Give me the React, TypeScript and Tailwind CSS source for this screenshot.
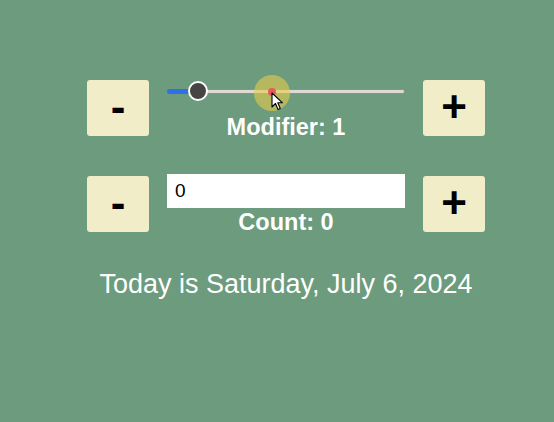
import React from "react";

function Btn({ label }: { label: string }) {
  return (
    <button className="w-[62px] h-[56px] rounded-[3px] bg-[#f1edc8] text-black text-[44px] font-bold leading-none flex items-center justify-center pb-[3px] font-['Liberation_Sans',Arial,sans-serif]">
      {label}
    </button>
  );
}

export default function App() {
  return (
    <div className="relative w-[554px] h-[422px] bg-[#6c9b7d] font-['Liberation_Sans',Arial,sans-serif] overflow-hidden">
      <div className="flex flex-col items-center pt-[80px] pl-[18px]">
        <div className="flex items-start gap-[18px]">
          <Btn label="-" />
          <div className="w-[238px] flex flex-col items-center">
            <div className="relative w-[238px] h-[22px] flex items-center">
              <div className="relative w-full h-[5px] rounded-full bg-[#dcdad2] border border-[#8f8f8a]">
                <div className="absolute left-[-1px] top-[-1px] w-[24px] h-[5px] rounded-l-full bg-[#2f6fe8]" />
              </div>
              <div className="absolute left-[21px] top-[1px] w-[20px] h-[20px] rounded-full bg-[#474544] border-2 border-white" />
            </div>
            <div className="mt-[12px] text-white font-bold text-[23.5px] leading-[26px]">Modifier: 1</div>
          </div>
          <Btn label="+" />
        </div>
        <div className="flex items-start gap-[18px] mt-[34px]">
          <div className="mt-[2px]">
            <Btn label="-" />
          </div>
          <div className="w-[238px] flex flex-col items-center">
            <input
              readOnly
              value="0"
              className="w-[238px] h-[34px] bg-white px-[8px] text-[19px] text-black outline-none font-['Liberation_Sans',Arial,sans-serif]"
            />
            <div className="mt-[1px] text-white font-bold text-[23.5px] leading-[26px]">Count: 0</div>
          </div>
          <div className="mt-[2px]">
            <Btn label="+" />
          </div>
        </div>
        <div className="mt-[33px] text-white text-[27px] leading-[32px]">Today is Saturday, July 6, 2024</div>
      </div>
      <div className="absolute left-[254px] top-[75px] w-[36px] h-[36px] rounded-full bg-[#e6cc4a]/60" />
      <div className="absolute left-[268px] top-[88px] w-[8px] h-[8px] rounded-full bg-[#e85a5a]" />
      <svg className="absolute left-[271px] top-[92px]" width="14" height="20" viewBox="0 0 14 20">
        <path d="M1 1 L1 15 L4.5 11.5 L7 17.5 L9.3 16.5 L6.8 10.8 L11.5 10.8 Z" fill="white" stroke="black" strokeWidth="1.1" strokeLinejoin="round" />
      </svg>
    </div>
  );
}
